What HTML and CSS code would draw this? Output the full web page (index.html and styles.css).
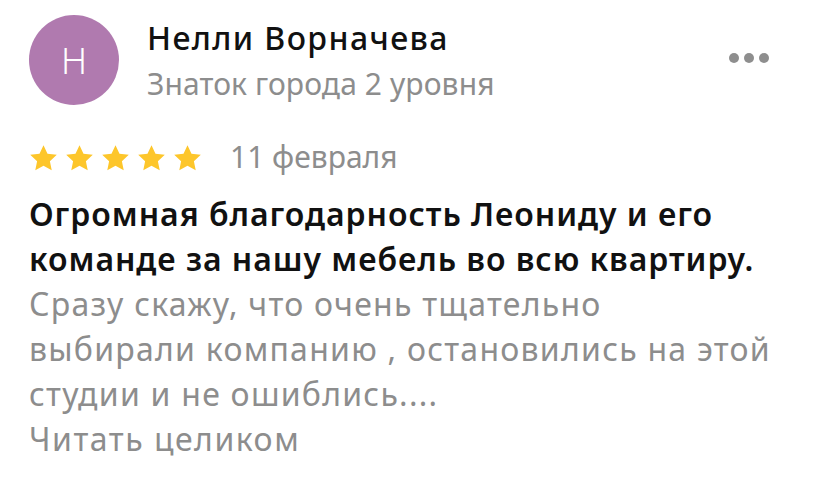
FILE: index.html
```html
<!DOCTYPE html>
<html lang="ru">
<head>
    <meta charset="UTF-8">
    <title>Отзыв</title>
    <link rel="stylesheet" href="styles.css">
</head>
<body>
    <div class="review">
        <div class="header">
            <div class="avatar">Н</div>
            <div class="author">
                <div class="name">Нелли Ворначева</div>
                <div class="level">Знаток города 2 уровня</div>
            </div>
            <div class="more">
                <span></span><span></span><span></span>
            </div>
        </div>

        <div class="meta">
            <div class="stars">
                <svg viewBox="0 0 24 24"><path d="M12 1l3.3 7 7.7.9-5.7 5.3 1.5 7.6L12 18l-6.8 3.8 1.5-7.6L1 8.9 8.7 8z"/></svg>
                <svg viewBox="0 0 24 24"><path d="M12 1l3.3 7 7.7.9-5.7 5.3 1.5 7.6L12 18l-6.8 3.8 1.5-7.6L1 8.9 8.7 8z"/></svg>
                <svg viewBox="0 0 24 24"><path d="M12 1l3.3 7 7.7.9-5.7 5.3 1.5 7.6L12 18l-6.8 3.8 1.5-7.6L1 8.9 8.7 8z"/></svg>
                <svg viewBox="0 0 24 24"><path d="M12 1l3.3 7 7.7.9-5.7 5.3 1.5 7.6L12 18l-6.8 3.8 1.5-7.6L1 8.9 8.7 8z"/></svg>
                <svg viewBox="0 0 24 24"><path d="M12 1l3.3 7 7.7.9-5.7 5.3 1.5 7.6L12 18l-6.8 3.8 1.5-7.6L1 8.9 8.7 8z"/></svg>
            </div>
            <div class="date">11 февраля</div>
        </div>

        <div class="text">
            <p class="title">Огромная благодарность Леониду и его<br>команде за нашу мебель во всю квартиру.</p>
            <p class="body">Сразу скажу, что очень тщательно<br>выбирали компанию , остановились на этой<br>студии и не ошиблись....</p>
            <a class="read-more">Читать целиком</a>
        </div>
    </div>
</body>
</html>
```

FILE: styles.css
```css
body {
    font-family: "Noto Sans", "Open Sans", sans-serif;
    background-color: #fff;
    color: #000;
    margin: 0;
    padding: 0;
}

.review {
    padding: 15px 0 0 29px;
}

.header {
    display: flex;
    align-items: flex-start;
}

.avatar {
    width: 90px;
    height: 90px;
    border-radius: 50%;
    background-color: #b07aaf;
    color: #fff;
    font-size: 36px;
    font-weight: 300;
    display: flex;
    align-items: center;
    justify-content: center;
    flex-shrink: 0;
}

.author {
    margin-left: 28px;
    flex: 1;
}

.name {
    font-size: 32px;
    font-weight: 500;
    line-height: 36px;
    letter-spacing: 1.4px;
    margin-top: 5px;
    color: #111;
}

.level {
    font-size: 30px;
    color: #8d8d8d;
    line-height: 36px;
    letter-spacing: 0.1px;
    margin-top: 10px;
}

.more {
    display: flex;
    gap: 5px;
    margin-top: 38px;
    margin-right: 59px;
}

.more span {
    width: 10px;
    height: 10px;
    border-radius: 50%;
    background-color: #8e8e8e;
}

.meta {
    display: flex;
    align-items: center;
    height: 36px;
    margin-top: 35px;
}

.stars {
    display: flex;
    gap: 7px;
}

.stars svg {
    width: 29px;
    height: 29px;
    fill: #fdc62b;
}

.date {
    font-size: 30px;
    color: #8d8d8d;
    margin-left: 28px;
    line-height: 36px;
    margin-top: -2px;
}

.text {
    margin-top: 15px;
}

.title {
    font-size: 32px;
    font-weight: 600;
    line-height: 45px;
    letter-spacing: 0.95px;
    margin: 0;
    color: #111;
}

.body {
    font-size: 32px;
    color: #8d8d8d;
    line-height: 45px;
    letter-spacing: 1.25px;
    margin: 0;
}

.read-more {
    font-size: 32px;
    color: #8d8d8d;
    line-height: 45px;
    letter-spacing: 1.5px;
    display: block;
}
```
